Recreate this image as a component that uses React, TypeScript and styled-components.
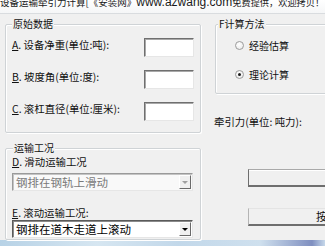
import React from "react";
import styled, { createGlobalStyle } from "styled-components";

const Global = createGlobalStyle`
  html, body { margin: 0; padding: 0; background: #f0f0f0; }
  body { width: 325px; height: 246px; overflow: hidden; }
`;

const Window = styled.div`
  width: 325px;
  height: 246px;
  overflow: hidden;
  background: #f0f0f0;
  display: flex;
  flex-direction: column;
  font-family: "Noto Sans CJK SC", "Liberation Sans", sans-serif;
  color: #111;
  text-spacing-trim: space-all;
`;

const TitleBar = styled.div`
  height: 13px;
  flex: none;
  background: linear-gradient(#ffffff, #f5f6f7);
  border-bottom: 1px solid #d9dcdf;
  display: flex;
  align-items: flex-start;
  white-space: nowrap;
  overflow: hidden;
`;

const TitleSeg = styled.span<{ $size: number; $latin?: boolean }>`
  flex: none;
  font-family: ${(p) => (p.$latin ? '"Liberation Sans", sans-serif' : '"Noto Sans CJK SC", sans-serif')};
  font-size: ${(p) => p.$size}px;
  line-height: 13px;
  margin-top: -4px;
  color: #1a1a1a;
`;

const Body = styled.div`
  flex: 1;
  display: flex;
  gap: 14px;
  padding-left: 5px;
  min-height: 0;
`;

const LeftCol = styled.div`
  width: 196px;
  flex: none;
  display: flex;
  flex-direction: column;
`;

const RightCol = styled.div`
  width: 140px;
  flex: none;
  display: flex;
  flex-direction: column;
`;

const GroupBox = styled.div<{ $top: number; $height: number }>`
  position: relative;
  box-sizing: border-box;
  margin-top: ${(p) => p.$top}px;
  height: ${(p) => p.$height}px;
  border: 1px solid #cfd3d6;
  border-radius: 2px;
  box-shadow: inset 1px 1px 0 #ffffff, 1px 1px 0 #ffffff;
`;

const Legend = styled.span<{ $left: number }>`
  position: absolute;
  top: -7px;
  left: ${(p) => p.$left}px;
  padding: 0 1px;
  background: #f0f0f0;
  font-size: 10px;
  line-height: 12px;
  color: #111;
  white-space: nowrap;
`;

const FieldGrid = styled.div`
  display: grid;
  grid-template-columns: 1fr 50px;
  row-gap: 13px;
  align-items: start;
  padding: 13px 6px 0 6px;
`;

const FieldLabel = styled.div`
  font-size: 10.4px;
  line-height: 14px;
  white-space: nowrap;
  color: #111;
`;

const TextInput = styled.div`
  box-sizing: border-box;
  width: 50px;
  height: 19px;
  background: #fff;
  border: 1px solid;
  border-color: #6f6f6f #e6e6e6 #e6e6e6 #6f6f6f;
  box-shadow: inset 1px 1px 0 #a8a8a8;
`;

const Stack = styled.div`
  display: flex;
  flex-direction: column;
  padding: 7px 6px 0 6px;
`;

const StackLabel = styled.div<{ $gap: number }>`
  margin-top: ${(p) => p.$gap}px;
  font-size: 10.4px;
  line-height: 12px;
  white-space: nowrap;
`;

const Combo = styled.div<{ $disabled?: boolean; $gap: number }>`
  box-sizing: border-box;
  margin-top: ${(p) => p.$gap}px;
  width: 181px;
  height: 18px;
  display: flex;
  align-items: center;
  background: ${(p) => (p.$disabled ? "#f9f9f9" : "#ffffff")};
  border: 1px solid;
  border-color: ${(p) => (p.$disabled ? "#9a9a9a #e6e6e6 #e6e6e6 #9a9a9a" : "#5a5a5a #e6e6e6 #e6e6e6 #5a5a5a")};
  box-shadow: inset 1px 1px 0 ${(p) => (p.$disabled ? "#c4c4c4" : "#8a8a8a")};
`;

const ComboText = styled.span<{ $disabled?: boolean }>`
  flex: 1;
  padding-left: 3px;
  font-size: 11.5px;
  line-height: 16px;
  white-space: nowrap;
  overflow: hidden;
  color: ${(p) => (p.$disabled ? "#7a7a7a" : "#000")};
`;

const DropButton = styled.span<{ $disabled?: boolean }>`
  box-sizing: border-box;
  width: 12px;
  height: 14px;
  margin-right: 1px;
  display: flex;
  align-items: center;
  justify-content: center;
  background: #f0f0f0;
  border: 1px solid;
  border-color: #ffffff #6a6a6a #6a6a6a #ffffff;
  &::after {
    content: "";
    border-left: 3px solid transparent;
    border-right: 3px solid transparent;
    border-top: 3px solid ${(p) => (p.$disabled ? "#a0a0a0" : "#000")};
  }
`;

const RadioList = styled.div`
  display: flex;
  flex-direction: column;
  gap: 15px;
  padding: 13px 0 0 19px;
`;

const RadioRow = styled.div`
  display: flex;
  align-items: center;
  gap: 5px;
  height: 14px;
  font-size: 10px;
  white-space: nowrap;
`;

const RadioDot = styled.span<{ $checked?: boolean }>`
  box-sizing: border-box;
  width: 9px;
  height: 9px;
  border-radius: 50%;
  border: 1px solid #9c9c9c;
  background: radial-gradient(circle at 40% 35%, #ffffff, #e6e6e6);
  display: flex;
  align-items: center;
  justify-content: center;
  &::after {
    content: "";
    width: 3px;
    height: 3px;
    border-radius: 50%;
    background: ${(p) => (p.$checked ? "#1a1a1a" : "transparent")};
  }
`;

const ResultLabel = styled.div`
  margin-top: 22px;
  margin-left: -1px;
  font-size: 10.4px;
  line-height: 12px;
  white-space: nowrap;
`;

const ResultBox = styled.div`
  box-sizing: border-box;
  margin-top: 41px;
  margin-left: 33px;
  width: 110px;
  height: 18px;
  background: #f0f0f0;
  border-top: 1px solid #a9a9a9;
  border-left: 1px solid #6e6e6e;
  border-bottom: 2px solid #6e6e6e;
  box-shadow: inset 0 1px 0 #ffffff;
`;

const PushButton = styled.div`
  box-sizing: border-box;
  margin-top: 21px;
  margin-left: 33px;
  width: 110px;
  height: 18px;
  background: #f0f0f0;
  border-top: 1px solid #e4e4e4;
  border-left: 1px solid #b4b4b4;
  border-bottom: 2px solid #6e6e6e;
  padding-left: 67px;
  font-size: 11px;
  line-height: 15px;
  white-space: nowrap;
  overflow: hidden;
`;

const Taskbar = styled.div`
  height: 6px;
  flex: none;
  background: linear-gradient(90deg, #b7d2e6 0%, #d6e6f1 30%, #c2d8ea 55%, #cfe0ee 80%, #7f8fc0 96%, #c6d8ea 100%);
`;

export default function App() {
  return (
    <>
      <Global />
      <Window>
        <TitleBar>
          <TitleSeg $size={9.5}>设备运输牵引力计算[《安装网》</TitleSeg>
          <TitleSeg $size={12} $latin>
            www.azwang.com
          </TitleSeg>
          <TitleSeg $size={9.2}>免费提供，欢迎拷贝！</TitleSeg>
        </TitleBar>
        <Body>
          <LeftCol>
            <GroupBox $top={10} $height={109}>
              <Legend $left={6}>原始数据</Legend>
              <FieldGrid>
                <FieldLabel>
                  <u>A</u>. 设备净重(单位:吨):
                </FieldLabel>
                <TextInput />
                <FieldLabel>
                  <u>B</u>. 坡度角(单位:度):
                </FieldLabel>
                <TextInput />
                <FieldLabel>
                  <u>C</u>. 滚杠直径(单位:厘米):
                </FieldLabel>
                <TextInput />
              </FieldGrid>
            </GroupBox>
            <GroupBox $top={15} $height={92}>
              <Legend $left={7}>运输工况</Legend>
              <Stack>
                <StackLabel $gap={0}>
                  <u>D</u>. 滑动运输工况
                </StackLabel>
                <Combo $disabled $gap={5}>
                  <ComboText $disabled>钢排在钢轨上滑动</ComboText>
                  <DropButton $disabled />
                </Combo>
                <StackLabel $gap={16}>
                  <u>E</u>. 滚动运输工况:
                </StackLabel>
                <Combo $gap={1}>
                  <ComboText>钢排在道木走道上滚动</ComboText>
                  <DropButton />
                </Combo>
              </Stack>
            </GroupBox>
          </LeftCol>
          <RightCol>
            <GroupBox $top={10} $height={70}>
              <Legend $left={2}>F计算方法</Legend>
              <RadioList>
                <RadioRow>
                  <RadioDot />
                  经验估算
                </RadioRow>
                <RadioRow>
                  <RadioDot $checked />
                  理论计算
                </RadioRow>
              </RadioList>
            </GroupBox>
            <ResultLabel>牵引力(单位: 吨力):</ResultLabel>
            <ResultBox />
            <PushButton>按钮</PushButton>
          </RightCol>
        </Body>
        <Taskbar />
      </Window>
    </>
  );
}
